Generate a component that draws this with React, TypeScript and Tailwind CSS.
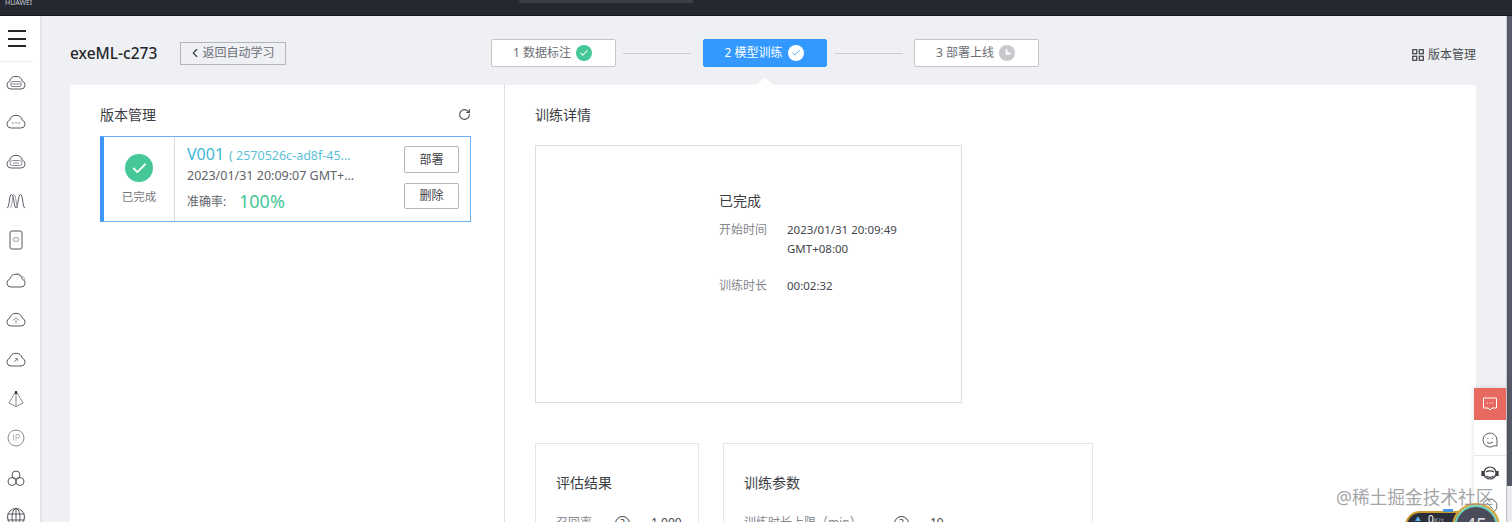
import { ChevronLeft, RotateCw, Check } from "lucide-react";

const font = { fontFamily: '"Noto Sans", "Noto Sans CJK SC", sans-serif' };

const Cloud = ({ children }: { children?: React.ReactNode }) => (
  <svg width="20" height="16" viewBox="0 0 20 16" fill="none" stroke="#55585f" strokeWidth="1">
    <path d="M5 15h10a4 4 0 0 0 1.300-7.800A6.500 6.500 0 0 0 3.700 7.200 4 4 0 0 0 5 15z" />
    {children}
  </svg>
);

const navIcons = [
  <Cloud key="a"><rect x="5" y="7.500" width="10" height="5" rx="1" stroke="#8a8d93" /><path d="M5.500 10h9" stroke="#8a8d93" /></Cloud>,
  <Cloud key="b"><path d="M6 10h1.500M9.300 10h1.500M12.500 10h1.500" /></Cloud>,
  <Cloud key="c"><rect x="4" y="7.500" width="12" height="5" rx="2.500" stroke="#8a8d93" /><path d="M7 10h6" stroke="#8a8d93" /></Cloud>,
  <svg key="d" width="20" height="16" viewBox="0 0 20 16" fill="none" stroke="#55585f" strokeWidth="1"><path d="M1 15C3.500 15 3 1.500 5.500 1.500S8 15 10 15 12 1.500 14.500 1.500 16.500 15 19 15" /><path d="M4 15C6.500 15 6 1.500 8 1.500S10.500 15 12 15" stroke="#9a9da3" /></svg>,
  <svg key="e" width="16" height="20" viewBox="0 0 16 20" fill="none" stroke="#55585f" strokeWidth="1"><rect x="2" y="1" width="12" height="18" rx="2" /><ellipse cx="8" cy="9.500" rx="3" ry="2" stroke="#9a9da3" /></svg>,
  <Cloud key="f"><path d="M9 2.500c2-1.500 5-1 6 1.500 3 .5 4.500 3 3.500 5.500" stroke="#9a9da3" /></Cloud>,
  <Cloud key="g"><path d="M10 12.500V8.500M7 9.500l3-3 3 3" stroke="#8a8d93" /></Cloud>,
  <Cloud key="h"><path d="M8 11l3.500-3.500M9 7.500h2.500V10" stroke="#8a8d93" /></Cloud>,
  <svg key="i" width="18" height="18" viewBox="0 0 18 18" fill="none" stroke="#8a8d93" strokeWidth="1"><path d="M9 1 2 13l7 3.500L16 13zM9 1v15.500" /><path d="M9 1v3" stroke="#33363c" strokeWidth="2" /></svg>,
  <svg key="j" width="18" height="18" viewBox="0 0 18 18" fill="none" stroke="#8a8d93" strokeWidth="1"><circle cx="9" cy="9" r="8" /><path d="M6.500 5.500v6M9 11.500v-6h2a1.600 1.600 0 0 1 0 3.500H9" stroke="#b5b7bb" /></svg>,
  <svg key="k" width="18" height="18" viewBox="0 0 18 18" fill="none" stroke="#55585f" strokeWidth="1"><circle cx="9" cy="6" r="4" /><circle cx="5" cy="12.500" r="4" /><circle cx="13" cy="12.500" r="4" /></svg>,
  <svg key="l" width="18" height="18" viewBox="0 0 18 18" fill="none" stroke="#55585f" strokeWidth="1"><circle cx="9" cy="9" r="8.500" /><ellipse cx="9" cy="9" rx="4" ry="8.500" /><path d="M9 .5v17M.5 6h17M.5 12h17" /></svg>,
];

const Info = () => (
  <span className="flex h-[15px] w-[15px] items-center justify-center rounded-full border border-[#3c3e44] text-[10px] leading-none text-[#3c3e44]">?</span>
);

function Step({ label, state }: { label: string; state: "done" | "active" | "todo" }) {
  const active = state === "active";
  return (
    <div className={`flex h-[28px] items-center justify-center gap-[5px] rounded-[2px] border pr-[2px] text-[12px] ${active ? "w-[124px] border-[#3399ff] bg-[#3399ff] text-white" : "w-[125px] border-[#c3c5c9] bg-white text-[#6b6e75]"}`}>
      <span>{label}</span>
      {state === "done" && (
        <span className="flex h-[16px] w-[16px] items-center justify-center rounded-full bg-[#46c797]">
          <Check size={10} strokeWidth={2.5} className="text-white" />
        </span>
      )}
      {state === "active" && (
        <span className="flex h-[16px] w-[16px] items-center justify-center rounded-full bg-white">
          <Check size={10} strokeWidth={2} className="text-[#3399ff]" />
        </span>
      )}
      {state === "todo" && (
        <span className="flex h-[16px] w-[16px] items-center justify-center rounded-full bg-[#c8c9cc]">
          <svg width="10" height="10" viewBox="0 0 10 10" fill="none" stroke="white" strokeWidth="1.800"><path d="M4.500 1v4.500H8.500" /></svg>
        </span>
      )}
    </div>
  );
}

export default function App() {
  return (
    <div style={font} className="relative flex h-[522px] w-[1512px] flex-col overflow-hidden bg-[#eef0f3]">
      {/* top bar */}
      <div className="flex h-[16px] shrink-0 items-start border-b border-[#15171b] bg-[#252830]">
        <span className="mt-[-2px] ml-[5px] text-[7px] leading-[10px] text-[#c9cbd0]">HUAWEI</span>
        <div className="ml-[487px] h-[3px] w-[174px] rounded-b-[2px] bg-[#3c3f48]" />
      </div>

      <div className="flex min-h-0 flex-1">
        {/* side nav */}
        <div className="flex w-[42px] shrink-0 flex-col border-r-2 border-[#e3e5e9] bg-white">
          <div className="flex h-[46px] w-[33px] shrink-0 items-center justify-center border-b border-[#eeeeee]">
            <div className="flex w-[18px] flex-col gap-[5.500px]">
              <div className="h-[2px] bg-[#24262b]" />
              <div className="h-[2px] bg-[#24262b]" />
              <div className="h-[2px] bg-[#24262b]" />
            </div>
          </div>
          <div className="flex w-[32px] flex-col items-center">
            {navIcons.map((icon, i) => (
              <div key={i} className="flex h-[39.600px] shrink-0 items-center justify-center">{icon}</div>
            ))}
          </div>
        </div>

        {/* main */}
        <div className="flex min-w-0 flex-1 flex-col pl-[28px] pr-[30px]">
          <div className="flex h-[69px] shrink-0 items-start pt-[23px]">
            <div className="flex h-[28px] w-[421px] shrink-0 items-center">
              <h1 className="mt-[-1px] w-[110px] text-[15.500px] font-medium leading-[28px] text-[#25272c]">exeML-c273</h1>
              <button className="flex h-[23px] w-[106px] items-center justify-center border border-[#b4b6ba] bg-[#eef0f3] pr-[3px] text-[12px] text-[#6b6e75]">
                <ChevronLeft size={14} className="text-[#3d3f45]" />
                返回自动学习
              </button>
            </div>
            <div className="flex items-center">
              <Step label="1 数据标注" state="done" />
              <div className="mx-[7px] h-px w-[68px] bg-[#c9cbcf]" />
              <div className="ml-[5px]"><Step label="2 模型训练" state="active" /></div>
              <div className="mx-[8px] h-px w-[68px] bg-[#c9cbcf]" />
              <div className="ml-[3px]"><Step label="3 部署上线" state="todo" /></div>
            </div>
            <div className="ml-auto flex h-[28px] items-center gap-[4px] pt-[4px] text-[12px] text-[#4a4c52]">
              <svg width="12" height="12" viewBox="0 0 12 12" fill="none" stroke="#4a4c52" strokeWidth="1.300">
                <rect x=".7" y=".7" width="4" height="4" />
                <rect x="7.300" y=".7" width="4" height="4" />
                <rect x=".7" y="7.300" width="4" height="4" />
                <rect x="7.300" y="7.300" width="4" height="4" />
              </svg>
              版本管理
            </div>
          </div>

          <div className="relative flex min-h-0 flex-1 bg-white">
            <div className="absolute top-[-7px] left-[686px] h-0 w-0 border-x-[9px] border-b-[7px] border-x-transparent border-b-white" />

            {/* versions */}
            <div className="w-[435px] shrink-0 border-r border-[#dedfe2] px-[30px] pt-[19px]">
              <div className="flex h-[21px] w-[371px] items-center justify-between">
                <h2 className="text-[14px] text-[#3c3e44]">版本管理</h2>
                <RotateCw size={13} className="text-[#4a4c52]" />
              </div>
              <div className="mt-[11px] flex h-[86px] w-[371px] border border-[#6cb0f5] border-l-[4px] border-l-[#3d97f5]">
                <div className="flex w-[71px] shrink-0 flex-col items-center border-r border-[#d9dadd] pt-[17px]">
                  <span className="flex h-[28px] w-[28px] items-center justify-center rounded-full bg-[#46c797]">
                    <Check size={17} strokeWidth={2.500} className="text-white" />
                  </span>
                  <span className="mt-[6px] text-[11.500px] leading-[18px] text-[#76787e]">已完成</span>
                </div>
                <div className="flex min-w-0 flex-1 flex-col pl-[12px] pt-[6px]">
                  <div className="flex items-baseline gap-[5px] leading-[22px]">
                    <span className="text-[16px] text-[#3bb8d4]">V001</span>
                    <span className="text-[12.500px] text-[#5cc1d8]">( 2570526c-ad8f-45...</span>
                  </div>
                  <div className="text-[12.500px] leading-[18px] text-[#606268]">2023/01/31 20:09:07 GMT+...</div>
                  <div className="mt-[2px] flex items-center leading-[26px]">
                    <span className="w-[52px] pt-[2px] text-[12px] text-[#606268]">准确率:</span>
                    <span className="text-[18px] text-[#46c797]">100%</span>
                  </div>
                </div>
                <div className="flex w-[66px] shrink-0 flex-col gap-[10px] pt-[9px] pr-[11px]">
                  <button className="h-[27px] rounded-[2px] border border-[#b4b6ba] text-[12px] text-[#3c3e44]">部署</button>
                  <button className="h-[26px] rounded-[2px] border border-[#b4b6ba] text-[12px] text-[#3c3e44]">删除</button>
                </div>
              </div>
            </div>

            {/* details */}
            <div className="min-w-0 flex-1 pl-[30px] pt-[19px]">
              <h2 className="h-[21px] text-[14px] leading-[21px] text-[#3c3e44]">训练详情</h2>
              <div className="mt-[20px] h-[258px] w-[427px] border border-[#dcdde0] pl-[183px] pt-[45px]">
                <h3 className="text-[14px] leading-[20px] text-[#3c3e44]">已完成</h3>
                <div className="mt-[9px] flex text-[12px] leading-[19px]">
                  <span className="w-[68px] shrink-0 text-[#85878d]">开始时间</span>
                  <span className="w-[125px] text-[11.500px] text-[#44464c]">2023/01/31 20:09:49 GMT+08:00</span>
                </div>
                <div className="mt-[18px] flex text-[12px] leading-[19px]">
                  <span className="w-[68px] shrink-0 text-[#85878d]">训练时长</span>
                  <span className="text-[11.500px] text-[#44464c]">00:02:32</span>
                </div>
              </div>
              <div className="mt-[40px] flex gap-[24px]">
                <div className="h-[120px] w-[164px] shrink-0 border border-[#e4e5e8] pl-[20px] pt-[29px]">
                  <h3 className="text-[14px] leading-[20px] text-[#3c3e44]">评估结果</h3>
                  <div className="mt-[21px] flex items-center text-[12px] text-[#85878d]">
                    <span className="w-[59px]">召回率</span>
                    <Info />
                    <span className="ml-[21px] text-[#44464c]">1.000</span>
                  </div>
                </div>
                <div className="h-[120px] w-[370px] shrink-0 border border-[#e4e5e8] pl-[20px] pt-[29px]">
                  <h3 className="text-[14px] leading-[20px] text-[#3c3e44]">训练参数</h3>
                  <div className="mt-[21px] flex items-center text-[12px] text-[#85878d]">
                    <span className="w-[150px]">训练时长上限（min）</span>
                    <Info />
                    <span className="ml-[21px] text-[#44464c]">10</span>
                  </div>
                </div>
              </div>
            </div>
          </div>
        </div>

        {/* page scrollbar */}
        <div className="w-[6px] shrink-0 border-l border-[#c9cbd0] bg-[#eef0f3]">
          <div className="h-[470px] bg-[#555866]" />
        </div>
      </div>

      {/* floating helpers */}
      <div className="absolute top-[388px] left-[1474px] flex w-[32px] flex-col bg-white shadow-[0_0_6px_rgba(0,0,0,0.12)]">
        <div className="flex h-[32px] items-center justify-center bg-[#e8695f]">
          <svg width="16" height="16" viewBox="0 0 16 16" fill="none" stroke="white" strokeWidth="1"><path d="M1.500 2h13v10h-4.500L8 14l-2-2H1.500z" /><path d="M5 7h1M7.500 7h1M10 7h1" /></svg>
        </div>
        <div className="flex h-[36px] items-center justify-center border-b border-[#e8e8e8] pt-[4px]">
          <svg width="16" height="16" viewBox="0 0 16 16" fill="none" stroke="#5a5c62" strokeWidth="1"><path d="M15 8a7 7 0 1 0-3 5.800L15 14z" /><path d="M5.500 6.500h.8M10 6.500h.8M5 10c1.500 1.600 4.500 1.600 6 0" /></svg>
        </div>
        <div className="flex h-[36px] items-center justify-center">
          <svg width="18" height="18" viewBox="0 0 18 18" fill="none" stroke="#3c3e44" strokeWidth="1.200"><circle cx="9" cy="8" r="6" /><path d="M5 7c2-1.500 6-1.500 8 0M5.500 11c2 1.500 5 1.500 7 0" /><rect x="1" y="6.500" width="1.500" height="4" fill="#3c3e44" /><rect x="15.500" y="6.500" width="1.500" height="4" fill="#3c3e44" /></svg>
        </div>
        <div className="flex h-[36px] items-start justify-center pt-[6px]">
          <svg width="16" height="16" viewBox="0 0 16 16" fill="none" stroke="#6a6c72" strokeWidth="1"><circle cx="8" cy="8" r="7" /><path d="M5 5l6 6" /></svg>
        </div>
      </div>

      {/* network speed widget */}
      <div className="absolute top-[511px] left-[1405px] flex h-[30px] w-[92px] items-start rounded-[15px] border-t-2 border-l-2 border-[#c9982f] bg-[#2b2e38] pl-[8px] pt-[1px]">
        <span className="text-[6px] leading-[10px] text-[#5cb3ef]">▲</span>
        <span className="ml-[7px] text-[10px] leading-[10px] text-white">0<span className="text-[7px] text-[#a9abb0]">K/s</span></span>
      </div>
      <div className="absolute top-[509px] left-[1443px] h-[3px] w-[10px] bg-[#4d93d9]" />
      <div className="absolute top-[505px] left-[1454px] flex h-[44px] w-[44px] justify-center rounded-full border-2 border-[#6fd0c0] bg-[#4a4d59] pt-[7px] text-[19px] leading-[22px] text-[#d9dadd] outline-2 outline-[#d8a437]">45</div>

      {/* watermark */}
      <div className="pointer-events-none absolute top-[485px] left-[1336px] text-[17.700px] leading-[24px] whitespace-nowrap text-[#8e8f93] opacity-80">@稀土掘金技术社区</div>
    </div>
  );
}
